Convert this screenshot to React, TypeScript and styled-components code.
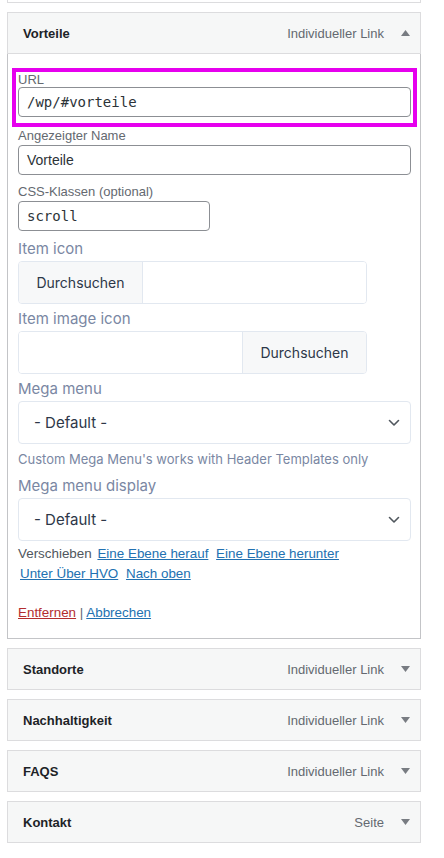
import { FC, ReactNode } from 'react'
import styled, { createGlobalStyle } from 'styled-components'

const GlobalStyle = createGlobalStyle`
  html, body {
    margin: 0;
    padding: 0;
    background: #ffffff;
  }
  body {
    font-family: 'Liberation Sans', Arial, sans-serif;
    font-size: 13px;
    color: #3c434a;
  }
  * {
    box-sizing: border-box;
  }
`

const Page = styled.div`
  width: 414px;
  margin-left: 7px;
`

/* bottom edge of the item above, cut off by the screenshot */
const PrevTail = styled.div`
  height: 3px;
  border: 1px solid #dcdcde;
  border-top: none;
  margin-bottom: 9px;
`

const Item = styled.div`
  margin-bottom: 9px;
`

const Handle = styled.div<{ open?: boolean }>`
  display: flex;
  align-items: center;
  height: 42px;
  padding: 0 5px 0 15px;
  background: #f6f7f7;
  border: 1px solid #dcdcde;
  ${(p) => p.open && `border-bottom-color: #dcdcde;`}
`

const Title = styled.span`
  flex: 1;
  font-size: 13px;
  font-weight: bold;
  color: #1d2327;
`

const ItemType = styled.span`
  font-size: 13px;
  color: #646970;
`

const Toggle = styled.span`
  display: flex;
  align-items: center;
  justify-content: center;
  width: 20px;
  margin-left: 11px;
  color: #787c82;
`

const Settings = styled.div`
  border: 1px solid #c3c4c7;
  border-top: none;
  padding: 14px 9px 15px 10px;
  background: #ffffff;
`

const Highlight = styled.div`
  margin: 0 -6px;
  padding: 0 2px 6px;
  border: 4px solid #e600ee;
`

const Field = styled.div<{ gap?: number }>`
  margin-top: ${(p) => p.gap ?? 0}px;
`

const Label = styled.label<{ tight?: boolean }>`
  display: block;
  font-size: 13px;
  line-height: ${(p) => (p.tight ? 15 : 18)}px;
  color: #646970;
`

const TextInput = styled.div<{ mono?: boolean; width?: string }>`
  display: flex;
  align-items: center;
  height: 30px;
  width: ${(p) => p.width ?? '100%'};
  padding: 0 8px;
  border: 1px solid #8c8f94;
  border-radius: 4px;
  background: #ffffff;
  color: #2c3338;
  font-size: 14px;
  font-family: ${(p) =>
    p.mono
      ? "'DejaVu Sans Mono', 'Liberation Mono', monospace"
      : "'Liberation Sans', Arial, sans-serif"};
`

const ThemeLabel = styled.div<{ gap?: number }>`
  margin-top: ${(p) => p.gap ?? 3}px;
  font-family: Inter, 'Noto Sans', sans-serif;
  font-size: 15px;
  line-height: 24px;
  color: #7a87a3;
`

const Note = styled.div`
  margin-top: 5px;
  font-family: Inter, 'Noto Sans', sans-serif;
  font-size: 13px;
  line-height: 21px;
  color: #7a87a3;
`

const BrowseGroup = styled.div<{ reverse?: boolean }>`
  display: flex;
  flex-direction: ${(p) => (p.reverse ? 'row-reverse' : 'row')};
  width: 349px;
  height: 43px;
  border: 1px solid #e2e8f0;
  border-radius: 4px;
  overflow: hidden;
`

const BrowseButton = styled.div<{ reverse?: boolean }>`
  display: flex;
  align-items: center;
  justify-content: center;
  width: 124px;
  background: #f7f8f9;
  font-family: Inter, 'Noto Sans', sans-serif;
  font-size: 14px;
  color: #2d3748;
  ${(p) =>
    p.reverse
      ? 'border-left: 1px solid #e2e8f0;'
      : 'border-right: 1px solid #e2e8f0;'}
`

const BrowseInput = styled.div`
  flex: 1;
  background: #ffffff;
`

const Select = styled.div`
  display: flex;
  align-items: center;
  justify-content: space-between;
  height: 43px;
  padding: 0 10px 0 15px;
  border: 1px solid #e2e8f0;
  border-radius: 4px;
  font-family: Inter, 'Noto Sans', sans-serif;
  font-size: 15px;
  color: #2d3748;
`

const MoveLine = styled.div`
  margin-top: 3px;
  font-size: 13.4px;
  line-height: 20px;
  color: #50575e;
`

const MoveLink = styled.a`
  display: inline-block;
  margin: 0 2px;
  white-space: nowrap;
  color: #2271b1;
  text-decoration: underline;
  cursor: pointer;
`

const Actions = styled.div`
  margin-top: 19px;
  font-size: 13.4px;
  line-height: 20px;
  color: #646970;
`

const ActionLink = styled.a<{ danger?: boolean }>`
  color: ${(p) => (p.danger ? '#b32d2e' : '#2271b1')};
  text-decoration: underline;
  cursor: pointer;
`

const Arrow: FC<{ up?: boolean }> = ({ up }) => (
  <svg width="9" height="6" viewBox="0 0 9 6">
    <path
      d={up ? 'M0 6 L4.5 0 L9 6 Z' : 'M0 0 L9 0 L4.5 6 Z'}
      fill="currentColor"
    />
  </svg>
)

const Chevron = () => (
  <svg width="12" height="8" viewBox="0 0 12 8">
    <path
      d="M1.5 1.5 L6 6 L10.5 1.5"
      fill="none"
      stroke="#50575e"
      strokeWidth="1.6"
      strokeLinecap="round"
      strokeLinejoin="round"
    />
  </svg>
)

const MenuHandle: FC<{ title: string; type: string; open?: boolean }> = ({
  title,
  type,
  open,
}) => (
  <Handle open={open}>
    <Title>{title}</Title>
    <ItemType>{type}</ItemType>
    <Toggle>
      <Arrow up={open} />
    </Toggle>
  </Handle>
)

const ClosedItem: FC<{ title: string; type: string }> = (props) => (
  <Item>
    <MenuHandle {...props} />
  </Item>
)

const SelectBox: FC<{ children: ReactNode }> = ({ children }) => (
  <Select>
    <span>{children}</span>
    <Chevron />
  </Select>
)

const closedItems = [
  { title: 'Standorte', type: 'Individueller Link' },
  { title: 'Nachhaltigkeit', type: 'Individueller Link' },
  { title: 'FAQS', type: 'Individueller Link' },
  { title: 'Kontakt', type: 'Seite' },
]

const moveLinks = [
  'Eine Ebene herauf',
  'Eine Ebene herunter',
  'Unter Über HVO',
  'Nach oben',
]

export default function App() {
  return (
    <>
      <GlobalStyle />
      <Page>
        <PrevTail />
        <Item>
          <MenuHandle title="Vorteile" type="Individueller Link" open />
          <Settings>
            <Highlight>
              <Label tight>URL</Label>
              <TextInput mono>/wp/#vorteile</TextInput>
            </Highlight>
            <Field>
              <Label>Angezeigter Name</Label>
              <TextInput>Vorteile</TextInput>
            </Field>
            <Field gap={8}>
              <Label>CSS-Klassen (optional)</Label>
              <TextInput mono width="192px">
                scroll
              </TextInput>
            </Field>

            <ThemeLabel gap={6}>Item icon</ThemeLabel>
            <BrowseGroup>
              <BrowseButton>Durchsuchen</BrowseButton>
              <BrowseInput />
            </BrowseGroup>

            <ThemeLabel>Item image icon</ThemeLabel>
            <BrowseGroup reverse>
              <BrowseButton reverse>Durchsuchen</BrowseButton>
              <BrowseInput />
            </BrowseGroup>

            <ThemeLabel>Mega menu</ThemeLabel>
            <SelectBox>- Default -</SelectBox>
            <Note>Custom Mega Menu's works with Header Templates only</Note>

            <ThemeLabel gap={4}>Mega menu display</ThemeLabel>
            <SelectBox>- Default -</SelectBox>

            <MoveLine>
              Verschieben
              {moveLinks.map((link) => (
                <span key={link}>
                  {' '}
                  <MoveLink>{link}</MoveLink>
                </span>
              ))}
            </MoveLine>

            <Actions>
              <ActionLink danger>Entfernen</ActionLink> |{' '}
              <ActionLink>Abbrechen</ActionLink>
            </Actions>
          </Settings>
        </Item>

        {closedItems.map((item) => (
          <ClosedItem key={item.title} {...item} />
        ))}
      </Page>
    </>
  )
}
